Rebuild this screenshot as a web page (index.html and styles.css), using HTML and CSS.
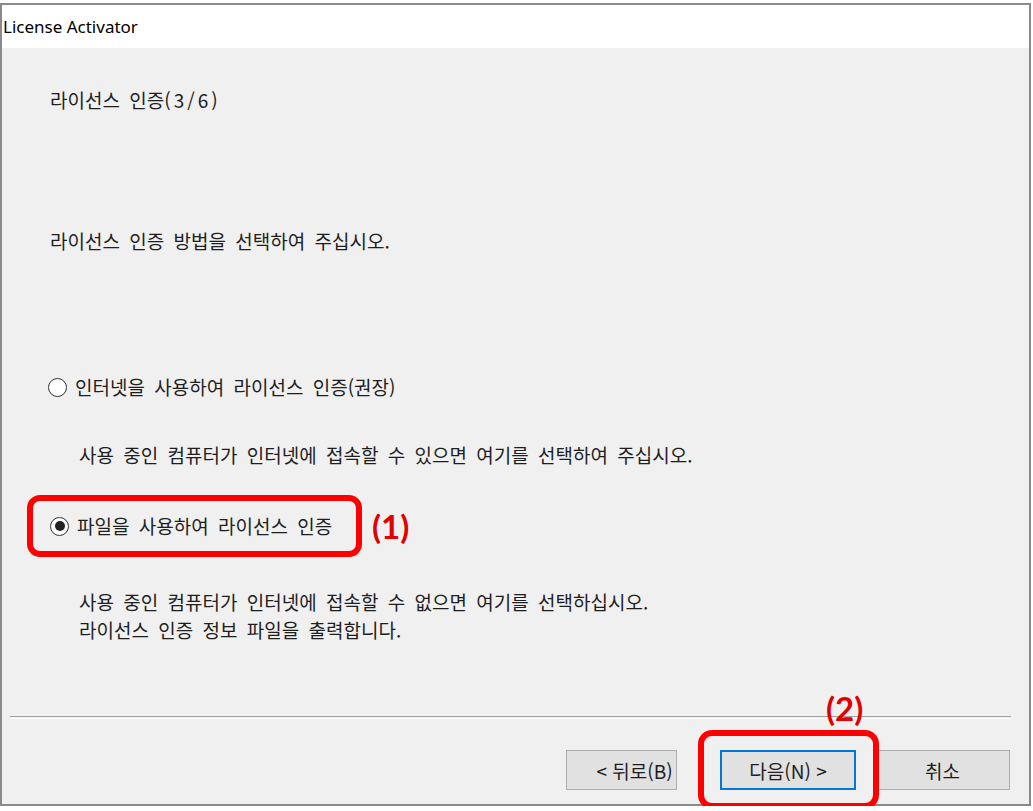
FILE: index.html
```html
<!DOCTYPE html>
<html lang="ko">
<head>
    <meta charset="UTF-8">
    <meta name="viewport" content="width=device-width, initial-scale=1.0">
    <title>License Activator</title>
    <link rel="stylesheet" href="styles.css">
</head>
<body>
    <div class="window">
        <div class="title-bar">License Activator</div>

        <div class="content">
            <div class="step-title">라이선스 인증<span class="latin">(3/6)</span></div>
            <div class="prompt">라이선스 인증 방법을 선택하여 주십시오.</div>

            <div class="option">
                <span class="radio"></span>
                <span class="option-label">인터넷을 사용하여 라이선스 인증(권장)</span>
            </div>
            <div class="option-desc">사용 중인 컴퓨터가 인터넷에 접속할 수 있으면 여기를 선택하여 주십시오.</div>

            <div class="mark-row">
                <div class="mark-box">
                    <div class="option">
                        <span class="radio checked"></span>
                        <span class="option-label">파일을 사용하여 라이선스 인증</span>
                    </div>
                </div>
                <span class="mark-label">(1)</span>
            </div>
            <div class="option-desc desc-file">
                <div class="desc-line">사용 중인 컴퓨터가 인터넷에 접속할 수 없으면 여기를 선택하십시오.</div>
                <div class="desc-line">라이선스 인증 정보 파일을 출력합니다.</div>
            </div>
        </div>

        <div class="footer">
            <div class="separator"></div>
            <div class="buttons">
                <button class="btn btn-back">&lt; 뒤로(B)</button>
                <div class="btn-wrap">
                    <button class="btn btn-next">다음(N) &gt;</button>
                    <span class="mark-ring"></span>
                    <span class="mark-label mark-top">(2)</span>
                </div>
                <button class="btn btn-cancel">취소</button>
            </div>
        </div>
    </div>
</body>
</html>
```

FILE: styles.css
```css
body {
    margin: 0;
    background: #fff;
    font-family: "Noto Sans CJK KR", "Noto Sans", sans-serif;
    color: #1e1e1e;
}

.window {
    margin-top: 3px;
    width: 1031px;
    height: 803px;
    box-sizing: border-box;
    border: 2px solid #8a8a8a;
    background: #f0f0f0;
    display: flex;
    flex-direction: column;
}

.title-bar {
    height: 43px;
    background: #fff;
    padding-left: 1px;
    display: flex;
    align-items: center;
    font-family: "Noto Sans", sans-serif;
    font-size: 17px;
    color: #000;
}

.content {
    flex: 1;
    padding-left: 46px;
    font-size: 19px;
    word-spacing: 4px;
    line-height: 24px;
}

.step-title {
    margin-top: 40px;
    padding-left: 2px;
}

.latin {
    letter-spacing: 3px;
}

.prompt {
    margin-top: 117px;
    padding-left: 2px;
}

.option {
    margin-top: 122px;
    display: flex;
    align-items: center;
    gap: 8px;
}

.radio {
    width: 17px;
    height: 17px;
    border: 1px solid #333;
    border-radius: 50%;
    background: #fff;
    display: flex;
    align-items: center;
    justify-content: center;
    flex-shrink: 0;
}

.radio.checked::after {
    content: "";
    width: 10px;
    height: 10px;
    border-radius: 50%;
    background: #222;
}

.option-desc {
    margin-top: 44px;
    margin-left: 31px;
}

.desc-file {
    margin-top: 31px;
}

.desc-line {
    line-height: 28px;
}

.mark-row {
    margin-top: 28px;
    margin-left: -21px;
    display: flex;
    align-items: center;
    gap: 10px;
}

.mark-box {
    width: 335px;
    box-sizing: border-box;
    border: 6px solid #ff0000;
    border-radius: 13px;
    padding: 13px 0 13px 17px;
}

.mark-box .option {
    margin-top: 0;
}

.mark-label {
    font-family: Lato, "Liberation Sans", sans-serif;
    font-weight: bold;
    font-size: 33px;
    color: #e00000;
    word-spacing: 0;
}

.footer {
    height: 88px;
}

.separator {
    margin: 0 18px 0 8px;
    height: 1px;
    border-top: 1px solid #a0a0a0;
    border-bottom: 1px solid #fff;
}

.buttons {
    margin-top: 31px;
    padding-right: 19px;
    display: flex;
    justify-content: flex-end;
    align-items: center;
}

.btn {
    height: 40px;
    background: #e1e1e1;
    border: 1px solid #adadad;
    font-family: "Noto Sans CJK KR", sans-serif;
    font-size: 19px;
    color: #1e1e1e;
    padding: 0;
}

.btn-back {
    width: 111px;
    padding-left: 26px;
}

.btn-wrap {
    position: relative;
    margin-left: 43px;
    margin-right: 19px;
    display: flex;
}

.btn-next {
    width: 136px;
    border: 2px solid #0078d7;
}

.btn-cancel {
    width: 135px;
}

.mark-ring {
    position: absolute;
    top: -20px;
    left: -22px;
    right: -23px;
    bottom: -19px;
    border: 6px solid #ff0000;
    border-radius: 14px;
}

.mark-top {
    position: absolute;
    top: -62px;
    left: 106px;
}
```
